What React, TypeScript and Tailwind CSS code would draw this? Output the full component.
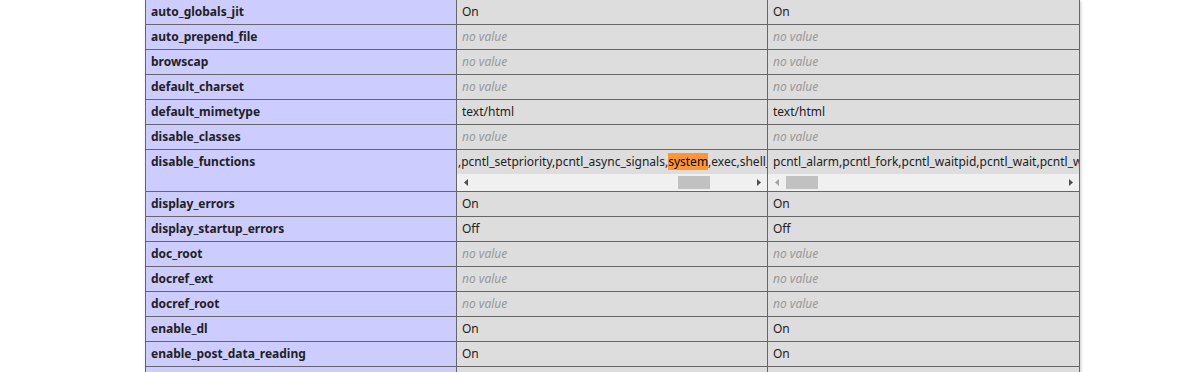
import React from "react";

type Row = { name: string; local: string | null; master: string | null };

const rows: Row[] = [
  { name: "auto_globals_jit", local: "On", master: "On" },
  { name: "auto_prepend_file", local: null, master: null },
  { name: "browscap", local: null, master: null },
  { name: "default_charset", local: null, master: null },
  { name: "default_mimetype", local: "text/html", master: "text/html" },
  { name: "disable_classes", local: null, master: null },
];

const rowsAfter: Row[] = [
  { name: "display_errors", local: "On", master: "On" },
  { name: "display_startup_errors", local: "Off", master: "Off" },
  { name: "doc_root", local: null, master: null },
  { name: "docref_ext", local: null, master: null },
  { name: "docref_root", local: null, master: null },
  { name: "enable_dl", local: "On", master: "On" },
  { name: "enable_post_data_reading", local: "On", master: "On" },
  { name: "error_append_string", local: null, master: null },
];

function Value({ v }: { v: string | null }) {
  return (
    <td className="border border-[#666] bg-[#ddd] px-[5px] py-[4px] align-top">
      {v === null ? <i className="text-[#999]">no value</i> : v}
    </td>
  );
}

function Arrow({ dir, dim }: { dir: "l" | "r"; dim?: boolean }) {
  return (
    <div className="flex h-[17px] w-[17px] shrink-0 items-center justify-center">
      <svg width="4" height="7" viewBox="0 0 4 7">
        <path d={dir === "l" ? "M4 0 L0 3.5 L4 7 Z" : "M0 0 L4 3.5 L0 7 Z"} fill={dim ? "#a3a3a3" : "#505050"} />
      </svg>
    </div>
  );
}

function FakeScroll({ thumbLeft, leftDim }: { thumbLeft: number; leftDim?: boolean }) {
  return (
    <div className="relative flex h-[17px] w-full bg-[#f0f0f0]">
      <Arrow dir="l" dim={leftDim} />
      <div className="flex-1" />
      <Arrow dir="r" />
      <div className="absolute top-[2px] h-[13px] w-[32px] bg-[#c1c1c1]" style={{ left: thumbLeft }} />
    </div>
  );
}

export default function App() {
  return (
    <div className="h-[372px] overflow-hidden bg-white text-[12px] leading-[16px] text-[#222]" style={{ fontFamily: '"Noto Sans", "Liberation Sans", sans-serif' }}>
      <table className="ml-[145px] -mt-px w-[934px] table-fixed border-collapse shadow-[1px_2px_3px_#ccc]">
        <colgroup>
          <col className="w-[311px]" />
          <col className="w-[311px]" />
          <col className="w-[312px]" />
        </colgroup>
        <tbody>
          {rows.map((r) => (
            <tr key={r.name}>
              <td className="border border-[#666] bg-[#ccf] px-[5px] py-[4px] align-top font-bold">{r.name}</td>
              <Value v={r.local} />
              <Value v={r.master} />
            </tr>
          ))}
          <tr>
            <td className="border border-[#666] bg-[#ccf] px-[5px] py-[4px] align-top font-bold">disable_functions</td>
            <td className="border border-[#666] bg-[#ddd] p-0 align-top">
              <div className="overflow-hidden whitespace-nowrap py-[4px] pl-[1px]">
                ,pcntl_setpriority,pcntl_async_signals,<span className="bg-[#ff9632] text-black">system</span>,exec,shell_exec,popen,proc_open
              </div>
              <FakeScroll thumbLeft={221} />
            </td>
            <td className="border border-[#666] bg-[#ddd] p-0 align-top">
              <div className="overflow-hidden whitespace-nowrap px-[5px] py-[4px]">
                pcntl_alarm,pcntl_fork,pcntl_waitpid,pcntl_wait,pcntl_wifexited,pcntl_wifstopped
              </div>
              <FakeScroll thumbLeft={18} leftDim />
            </td>
          </tr>
          {rowsAfter.map((r) => (
            <tr key={r.name}>
              <td className="border border-[#666] bg-[#ccf] px-[5px] py-[4px] align-top font-bold">{r.name}</td>
              <Value v={r.local} />
              <Value v={r.master} />
            </tr>
          ))}
        </tbody>
      </table>
    </div>
  );
}
